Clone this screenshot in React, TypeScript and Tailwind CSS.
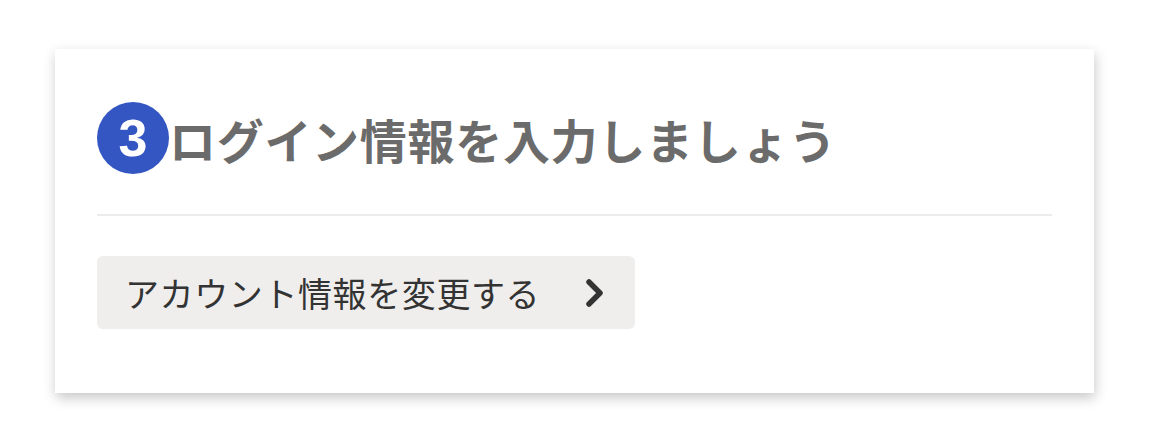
import React from "react";

export default function App() {
  return (
    <div className="w-[1158px] h-[424px] bg-white pt-[49px] pl-[55px]" style={{ fontFamily: '"Noto Sans CJK JP", "Noto Sans", sans-serif' }}>
      <div className="w-[1039px] h-[344px] bg-white shadow-[1px_5px_12px_rgba(0,0,0,0.22)] px-[42px] pt-[53px]">
        <div className="flex items-center h-[72px]">
          <div className="w-[72px] h-[72px] rounded-full bg-[#3456c3] flex items-center justify-center shrink-0">
            <span className="text-white font-bold text-[52px] leading-none" style={{ fontFamily: '"Liberation Sans", Arial, sans-serif' }}>3</span>
          </div>
          <h1 className="text-[47px] font-bold text-[#6b6b6b] leading-none tracking-[0.7px] whitespace-nowrap">
            ログイン情報を入力しましょう
          </h1>
        </div>
        <div className="mt-[40px] h-[2px] bg-[#ececec]" />
        <button className="mt-[40px] w-[538px] h-[73px] rounded-[6px] bg-[#efeeed] flex items-center justify-between pl-[28px] pr-[30px]">
          <span className="text-[34px] text-[#333333] leading-none tracking-[0.6px] whitespace-nowrap">アカウント情報を変更する</span>
          <svg width="20" height="28" viewBox="0 0 20 28" fill="none">
            <path d="M4 3 L15 14 L4 25" stroke="#333333" strokeWidth="5.5" strokeLinecap="round" strokeLinejoin="round" />
          </svg>
        </button>
      </div>
    </div>
  );
}
